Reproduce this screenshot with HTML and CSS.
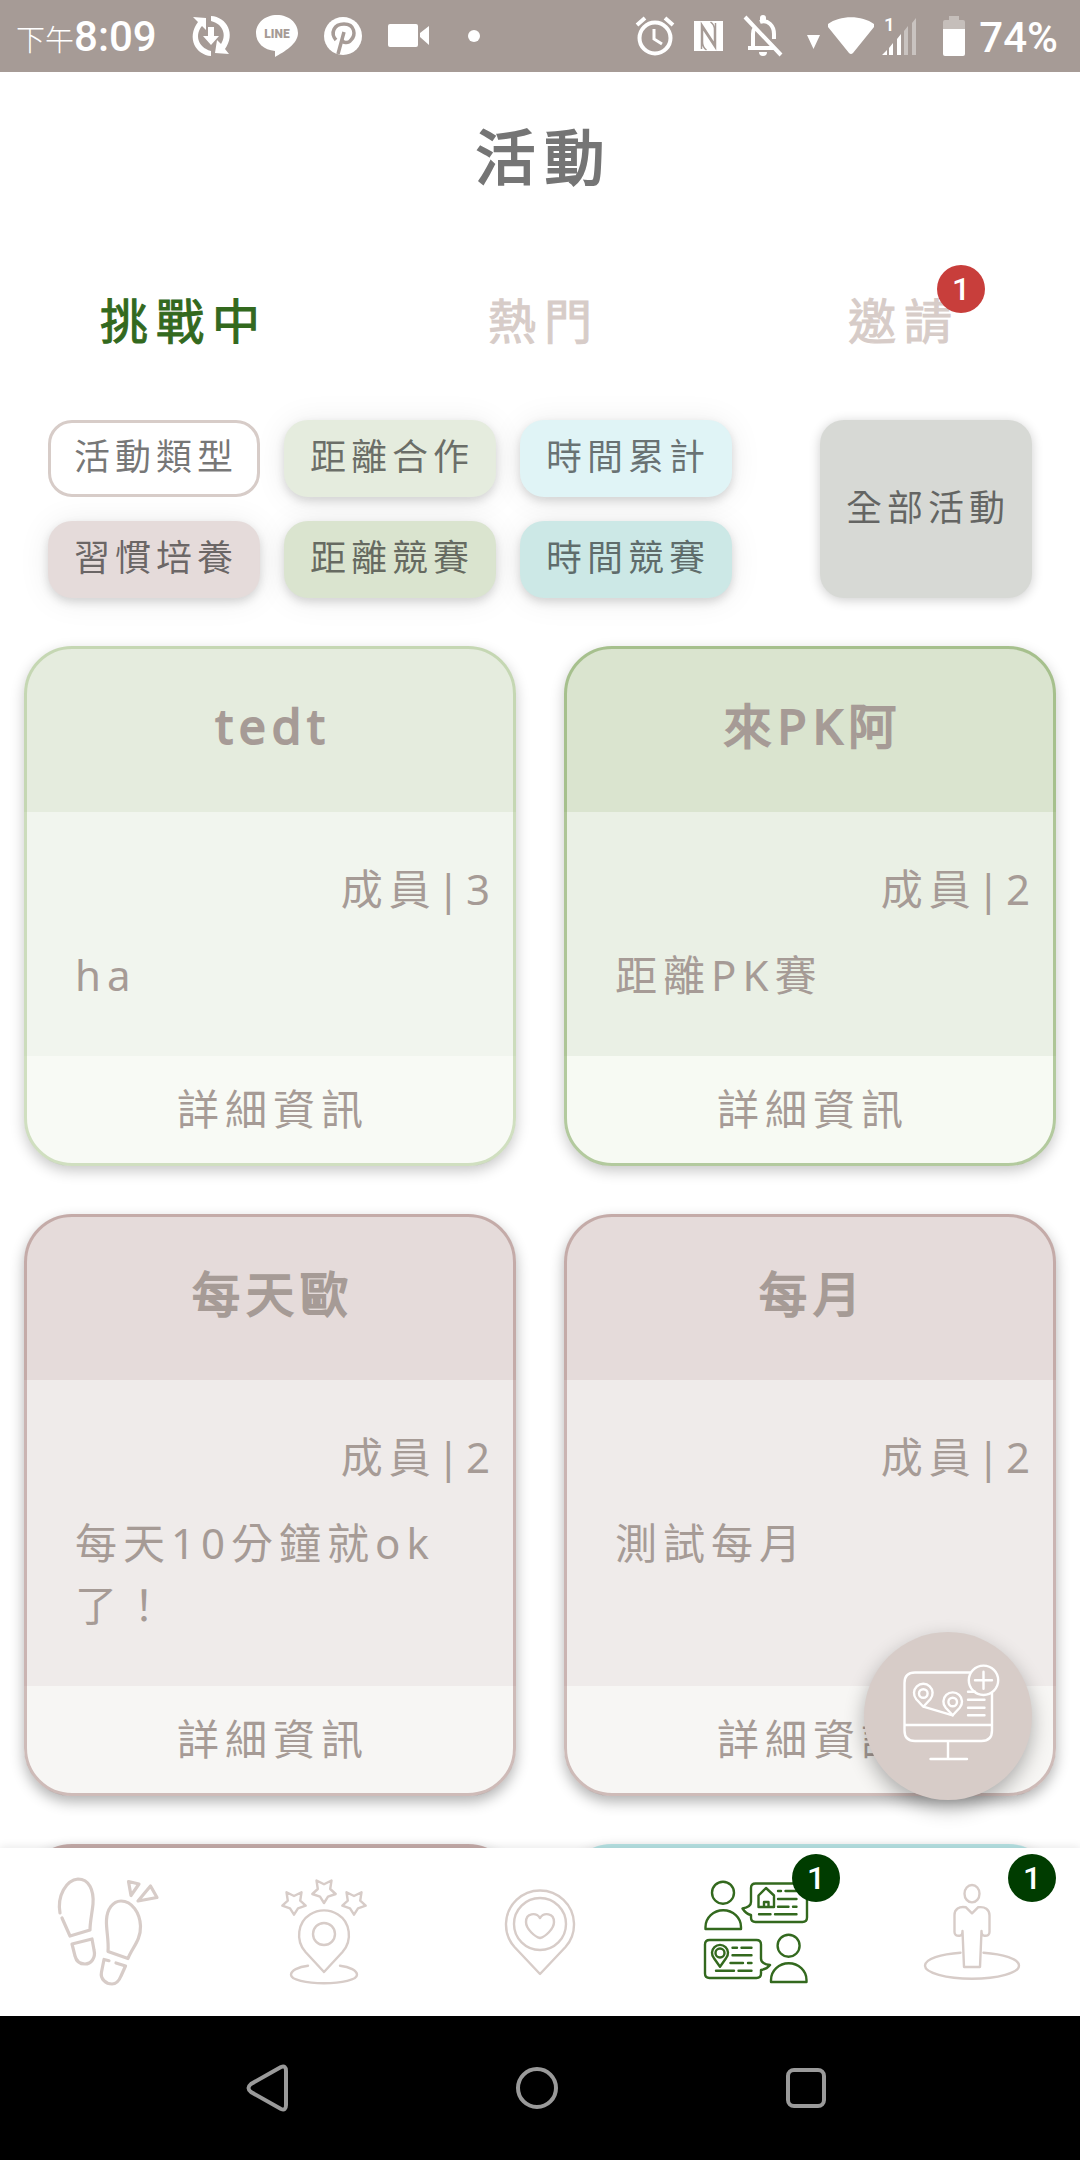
FILE: index.html
```html
<!DOCTYPE html>
<html lang="zh-Hant">
<head>
<meta charset="utf-8">
<meta name="viewport" content="width=device-width, initial-scale=1">
<title>活動</title>
<link rel="stylesheet" href="styles.css">
</head>
<body>
<div class="app">
  <div class="status">
    <div class="status-left">
      <span class="clock"><small>下午</small>8:09</span>
      <svg width="38" height="40" viewBox="0 0 38 40"><g fill="#fff"><path d="M1 1l13 1v12l-4-4C3 18 5 31 19 35v5C4 39-6 22 6 6z"/><path d="M37 38l-14-1 2-13 4 4c6-9 2-20-10-23V0c16 1 25 18 14 33z"/><path d="M16 11h6v9h5l-8 9-8-9h5z"/></g></svg>
      <svg width="42" height="42" viewBox="0 0 42 42"><path d="M21 0C9 0 0 8 0 18s8 17 19 18v6c9-5 23-13 23-24C42 8 33 0 21 0z" fill="#fff"/><text class="line-logo" x="21" y="23" text-anchor="middle">LINE</text></svg>
      <svg width="38" height="40" viewBox="0 0 38 40"><circle cx="19" cy="20" r="19" fill="#fff"/><path d="M12 24c-6-7-2-16 8-16 11 0 12 11 7 16-3 4-9 3-9-1M20 16l-6 22" fill="none" stroke="#a69b96" stroke-width="3.500"/></svg>
      <svg width="42" height="40" viewBox="0 0 42 40"><path d="M2 8h26q2 0 2 2v19q0 2-2 2H2q-2 0-2-2V10q0-2 2-2zM32 17l9-7v19l-9-8z" fill="#fff"/></svg>
      <svg width="36" height="40" viewBox="0 0 36 40"><circle cx="18" cy="20" r="6" fill="#fff"/></svg>
    </div>
    <div class="status-right">
      <svg width="38" height="40" viewBox="0 0 38 40"><g fill="none" stroke="#fff" stroke-width="4"><circle cx="19" cy="22" r="15.500"/><path d="M1 9l8-7M37 9l-8-7"/><path d="M18 13v10l8 5" stroke-width="3"/></g></svg>
      <svg width="29" height="40" viewBox="0 0 29 40"><path d="M0 5h29v30H0z" fill="#fff"/><path d="M7.500 33V8l13 20V14c0-4-1-6-4-8M21.500 7v25l-13-20v14c0 4 1 6 4 8" fill="none" stroke="#a69b96" stroke-width="1.500"/></svg>
      <svg width="44" height="42" viewBox="0 0 44 42"><g fill="none" stroke="#fff" stroke-width="4"><path d="M2 2l36 38M5 33h26M10 33V19q0-4 2-7M17 7C25 4 31 11 31 19v5"/></g><path d="M17 5V3q0-3 3-3t3 3v2zM16 37h8q0 4-4 4t-4-4z" fill="#fff"/></svg>
      <svg width="116" height="40" viewBox="0 0 116 40"><path d="M0 19h13L6.500 33zM21 8C33-1 55-1 67 8v3L46 37q-2 2-4 0L21 11z" fill="#fff"/><path d="M75 39l5-5v5zM82 32l4-5v12h-4zM90 23l4-5v21h-4z" fill="#fff"/><path d="M97 15l4-5v29h-4zM105 7l4-5v37h-4z" fill="#fff" opacity=".4"/><text class="sim" x="77" y="15">1</text></svg>
      <div class="battery">
        <svg width="22" height="40" viewBox="0 0 22 40"><path d="M6 0h10v4h4q2 0 2 2v8H0V6q0-2 2-2h4z" fill="#fff" opacity=".35"/><path d="M0 13h22v25q0 2-2 2H2q-2 0-2-2z" fill="#fff"/></svg>
        <span>74%</span>
      </div>
    </div>
  </div>

  <h1 class="title">活動</h1>

  <div class="tabs" role="tablist">
    <button class="tab is-active" role="tab" aria-selected="true">挑戰中</button>
    <button class="tab" role="tab" aria-selected="false">熱門</button>
    <button class="tab" role="tab" aria-selected="false">邀請<span class="badge badge-red">1</span></button>
  </div>

  <div class="filters">
    <div class="types">
      <span class="chip chip-label">活動類型</span>
      <button class="chip chip-sage">距離合作</button>
      <button class="chip chip-sky">時間累計</button>
      <button class="chip chip-rose">習慣培養</button>
      <button class="chip chip-green">距離競賽</button>
      <button class="chip chip-teal">時間競賽</button>
    </div>
    <button class="chip chip-all">全部活動</button>
  </div>

  <main class="list">
    <article class="card card-sage">
      <h2 class="card-head">tedt</h2>
      <div class="card-body"><p class="members">成員|3</p><p class="desc">ha</p></div>
      <button class="card-more">詳細資訊</button>
    </article>
    <article class="card card-green">
      <h2 class="card-head">來PK阿</h2>
      <div class="card-body"><p class="members">成員|2</p><p class="desc">距離PK賽</p></div>
      <button class="card-more">詳細資訊</button>
    </article>
    <article class="card card-rose">
      <h2 class="card-head">每天歐</h2>
      <div class="card-body"><p class="members">成員|2</p><p class="desc">每天10分鐘就ok了！</p></div>
      <button class="card-more">詳細資訊</button>
    </article>
    <article class="card card-rose">
      <h2 class="card-head">每月</h2>
      <div class="card-body"><p class="members">成員|2</p><p class="desc">測試每月</p></div>
      <button class="card-more">詳細資訊</button>
    </article>
    <article class="card card-rose card-next"><div class="card-head"></div></article>
    <article class="card card-teal card-next"><div class="card-head"></div></article>
  </main>

  <div class="dock">
    <button class="fab" aria-label="新增活動">
      <svg width="168" height="168" viewBox="0 0 168 168" fill="none" stroke="#fff" stroke-width="2.400" stroke-linecap="round" stroke-linejoin="round">
        <path d="M106 40.500H51q-10.500 0-10.500 10.500v47.500q0 10.500 10.500 10.500h66.500q10.500 0 10.500-10.500V61M40.500 93H128M84 109v18M66.500 127H103"/>
        <circle cx="119.500" cy="48.300" r="14.700"/><path d="M111 48.300h17M119.500 39.800v17"/>
        <path d="M104 59.700h7M104 67.700h16.500M104 75.700h16.500M104 83.300h16.500"/>
        <path d="M59.300 74.700l-7-7.500a9.300 9.300 0 1 1 14 0zL88.700 83.300"/>
        <path d="M88.700 83.300l-7-7.500a9.300 9.300 0 1 1 14 0z"/>
        <circle cx="59.300" cy="61.500" r="4.300"/><circle cx="88.700" cy="70" r="4.300"/>
      </svg>
    </button>
    <nav class="nav">
      <a class="nav-item" href="#walk" aria-label="步行">
        <svg viewBox="0 0 120 120" stroke-width="3.200">
          <path d="M12 41C9 24 18 8 30 7c11 0 16 11 15 25-1 10-3 18-3 26l-20 6-8-18"/>
          <path d="M24 72l20-5 2 11c2 8-3 14-9 14s-9-4-10-8z"/>
          <path d="M60 79.500C61 68 58 58 58.500 48 59 37 65 29 73 29c11 0 19 12 19.500 25C93 68 84 76 80 86.500z"/>
          <path d="M61 88.700l-5-1.200L53.500 100c-1.500 7 4.500 12 10.500 12 5 0 7-3 9-8l4.500-10-9.500-3"/>
          <path d="M80.500 9.500L91 12l-8 11.500zM102.500 14l6.500 11.500L90 29z"/>
        </svg>
      </a>
      <a class="nav-item" href="#goals" aria-label="目標">
        <svg viewBox="0 0 120 120" stroke-width="2.400">
          <path d="M60 100L41.500 80C31 68 34 50 46 42.500a26 26 0 0 1 28 0C86 50 89 68 78.500 80z"/>
          <circle cx="60" cy="62" r="11"/>
          <path d="M44 93.700c-10 1-17 5-17 9 0 5 15 8.600 33 8.600s33-3.600 33-8.600c0-4-7-8-17-9"/>
          <path id="star" d="M60 31l-4-6.300-7.700-2.700 5.500-5-1.300-8.500 7.500 3.800 7.500-3.800-1.300 8.500 5.500 5-7.700 2.700z"/>
          <use href="#star" x="-30" y="11.700"/><use href="#star" x="30" y="11.700"/>
        </svg>
      </a>
      <a class="nav-item" href="#favorites" aria-label="收藏">
        <svg viewBox="0 0 120 120" stroke-width="2.400">
          <path d="M60 102L34.500 75a34 34 0 1 1 51 0z"/>
          <circle cx="60" cy="52" r="26"/>
          <path d="M60 66c-5-1-14-9-14-16 0-9 10-10 14-4 4-6 14-5 14 4 0 7-9 15-14 16z"/>
        </svg>
      </a>
      <a class="nav-item is-current" href="#activity" aria-label="活動" aria-current="page">
        <svg viewBox="0 0 120 120" stroke-width="2.400">
          <circle cx="27" cy="20.700" r="11"/><path d="M9.500 57v-2a17.500 16.500 0 0 1 35.500 0v2z"/>
          <path d="M55 30V16q0-4.500 4.500-4.500h47q4.500 0 4.500 4.500v29.500q0 4.500-4.500 4.500h-47q-4.500 0-4.500-4.500V43q-5-1-8.500-6.500Q55 35 55 30z"/>
          <path d="M62.500 35V23.500L70 16l8 7.500V35zM68 35v-5h4.500v5"/>
          <path d="M82 19h3M89.500 19h11M82 27h18.500M82 34.700h10.500M97 34.700h3.500M63 42.300h11.500M79 42.300h21.500"/>
          <path d="M65 86.500V72.500q0-4.500-4.500-4.500h-47Q9 68 9 72.500v29q0 4.500 4.500 4.500h47q4.500 0 4.500-4.500V98q6-1 9-5-9-1-9-6.500z"/>
          <path d="M24 94.700l-6-8.500a8 8 0 1 1 12 0z"/><circle cx="24" cy="81" r="4.500"/>
          <path d="M36.500 75.700H41M45.500 75.700h10M36.500 83.300h19M34.500 91H47M52 91h3.500M20 98.700h18M42.500 98.700h13"/>
          <circle cx="92.600" cy="73.700" r="11"/><path d="M75 110v-2a17.500 16.500 0 0 1 35.500 0v2z"/>
        </svg>
        <span class="badge">1</span>
      </a>
      <a class="nav-item" href="#profile" aria-label="個人">
        <svg viewBox="0 0 120 120" stroke-width="2.400">
          <ellipse cx="60" cy="21.700" rx="7.500" ry="8.700"/>
          <path d="M54 35.300l6 6 6-6c7-1 11.500 2 11.500 8V60q0 4-5 3.700-3 0-3-4.700l-1.500 36H52l-1.500-36q0 4.700-3 4.700-5 .3-5-3.700V43c0-6 4.500-9 11.500-7.700z"/>
          <path d="M48.500 80.700C29 82 13 87 13 93.700c0 7 21 13 47 13s47-6 47-13c0-6.700-16-11.700-35.500-13"/>
        </svg>
        <span class="badge">1</span>
      </a>
    </nav>
  </div>

  <div class="system">
    <button class="system-key" aria-label="返回"><svg width="48" height="60" viewBox="0 0 48 60"><path d="M36 9L6 26q-5 4 0 8l30 17q5 2 5-4V13q0-6-5-4z"/></svg></button>
    <button class="system-key" aria-label="主畫面"><svg width="48" height="60" viewBox="0 0 48 60"><circle cx="24" cy="30" r="19"/></svg></button>
    <button class="system-key" aria-label="最近使用"><svg width="48" height="60" viewBox="0 0 48 60"><rect x="6" y="12" width="36" height="36" rx="6"/></svg></button>
  </div>
</div>
</body>
</html>
```
FILE: styles.css
```css
* { box-sizing: border-box; }

body {
  margin: 0;
  background: #fff;
  color: #a69b96;
  font-family: "Noto Sans", "Noto Sans CJK TC", sans-serif;
}

button {
  margin: 0;
  padding: 0;
  border: 0;
  background: none;
  color: inherit;
  font: inherit;
  cursor: pointer;
}

h1, h2, p { margin: 0; }
svg { display: block; flex: none; overflow: visible; }

.app {
  display: flex;
  flex-direction: column;
  height: 100vh;
}

/* Status bar */
.status {
  flex: none;
  display: flex;
  justify-content: space-between;
  height: 72px;
  padding: 0 22px 0 16px;
  background: #a69b96;
  color: #fff;
  font-family: Roboto, "Noto Sans CJK TC", sans-serif;
  font-size: 42px;
  font-weight: 500;
  line-height: 72px;
}
.status-left, .status-right, .battery { display: flex; align-items: center; }
.status-left { gap: 26px; }
.status-right { gap: 20px; }
.battery { gap: 14px; }
.battery span { padding-top: 4px; }
.clock { margin-right: 9px; padding-top: 6px; }
.clock small { font-size: 29px; font-weight: 300; }
.line-logo { fill: #a69b96; font: 900 12px Roboto, sans-serif; }
.sim { fill: #fff; font: 500 19px Roboto, sans-serif; }

/* Heading and tabs */
.title {
  flex: none;
  padding: 42px 0 0 9px;
  color: #757575;
  font-size: 60px;
  font-weight: 400;
  letter-spacing: 9px;
  line-height: 86px;
  text-align: center;
  -webkit-text-stroke: 2px;
}
.tabs {
  flex: none;
  display: grid;
  grid-template-columns: repeat(3, 1fr);
  margin-top: 72px;
}
.tab {
  position: relative;
  height: 100px;
  padding: 0 0 8px 8px;
  color: #d7ccc8;
  font-size: 48px;
  letter-spacing: 8px;
  -webkit-text-stroke: 1px;
}
.tab.is-active { color: #33691e; }

.badge {
  position: absolute;
  top: 6px;
  right: 24px;
  width: 48px;
  height: 48px;
  border-radius: 50%;
  background: #003c00;
  color: #fff;
  font: 500 32px/48px Roboto, sans-serif;
  letter-spacing: 0;
  text-align: center;
  -webkit-text-stroke: 0;
}
.badge-red { top: -7px; right: 95px; background: #c83e3b; }

/* Activity type filters */
.filters {
  flex: none;
  display: flex;
  justify-content: space-between;
  gap: 24px;
  padding: 48px 48px 0;
}
.types {
  display: grid;
  grid-template-columns: repeat(3, 212px);
  gap: 24px;
}
.chip {
  height: 77px;
  padding: 0 0 4px 4px;
  border-radius: 24px;
  box-shadow: 0 4px 10px rgba(0, 0, 0, .14), 0 2px 32px rgba(0, 0, 0, .08);
  color: rgba(0, 0, 0, .54);
  font-size: 36px;
  font-weight: 400;
  letter-spacing: 5px;
  line-height: 73px;
  text-align: center;
}
.chip-label {
  border: 3px solid #d7ccc8;
  box-shadow: none;
  line-height: 67px;
}
.chip-sage { background: #e5ecde; }
.chip-sky { background: #e0f4f6; }
.chip-rose { background: #e5dbda; }
.chip-green { background: #dae4cf; }
.chip-teal { background: #cce8e6; }
.chip-all {
  width: 212px;
  height: auto;
  background: #d7d9d5;
  box-shadow: 0 2px 12px rgba(0, 0, 0, .2);
}

/* Activity cards */
.list {
  flex: 1 1 0;
  min-height: 0;
  display: grid;
  grid-template-columns: 1fr 1fr;
  align-content: start;
  gap: 48px;
  padding: 48px 24px;
  overflow-y: auto;
  scrollbar-width: none;
}
.card {
  position: relative;
  display: flex;
  flex-direction: column;
  border-radius: 48px;
  background: var(--foot);
  box-shadow: 0 5px 14px rgba(0, 0, 0, .22);
  letter-spacing: 6px;
}
.card::after {
  content: "";
  position: absolute;
  inset: 0;
  border: 3px solid var(--line);
  border-radius: inherit;
  pointer-events: none;
}
.card-head {
  height: 166px;
  padding: 0 0 6px 6px;
  border-radius: 48px 48px 0 0;
  background: var(--head);
  font-size: 48px;
  font-weight: 400;
  line-height: 160px;
  text-align: center;
  -webkit-text-stroke: 2px;
}
.card-body {
  flex: 1;
  padding: 46px 20px 50px 51px;
  background: var(--body);
  font-size: 42px;
  line-height: 62px;
}
.members { margin-bottom: 24px; text-align: right; }
.desc { padding-right: 30px; }
.card-more {
  height: 110px;
  padding: 0 0 10px 6px;
  font-size: 42px;
  letter-spacing: 6px;
}
.card-sage { --head: #e5ecde; --body: #f1f5ee; --foot: #f8faf5; --line: rgba(153, 186, 119, .42); }
.card-green { --head: #dae4cf; --body: #eaf0e5; --foot: #f7faf3; --line: rgba(124, 163, 88, .55); }
.card-rose { --head: #e5dbda; --body: #efebea; --foot: #f7f6f4; --line: rgba(150, 105, 100, .42); box-shadow: 0 6px 14px rgba(0, 0, 0, .3); }
.card-teal { --head: #cce8e6; --body: #e6f4f3; --foot: #f3faf9; --line: rgba(150, 215, 222, .42); }
.card-next { min-height: 520px; }
.card-next::after { border-width: 5px; }

/* Bottom navigation */
.dock {
  position: relative;
  flex: none;
  background: #fff;
  box-shadow: 0 -2px 8px rgba(0, 0, 0, .08);
}
.nav { display: grid; grid-template-columns: repeat(5, 1fr); }
.nav-item {
  position: relative;
  display: flex;
  align-items: center;
  justify-content: center;
  height: 168px;
  color: #d7ccc8;
}
.nav-item svg {
  width: 120px;
  height: 120px;
  fill: none;
  stroke: currentColor;
  stroke-linecap: round;
  stroke-linejoin: round;
}
.nav-item.is-current { color: #33691e; }

.fab {
  position: absolute;
  right: 48px;
  bottom: 216px;
  width: 168px;
  height: 168px;
  border-radius: 50%;
  background: #d7ccc8;
  box-shadow: 0 8px 20px rgba(0, 0, 0, .3);
}

/* System keys */
.system {
  flex: none;
  display: flex;
  align-items: center;
  justify-content: space-evenly;
  height: 144px;
  padding: 0 30px 0 24px;
  background: #000;
}
.system-key svg { fill: none; stroke: #9a9a9a; stroke-width: 4; }
```
